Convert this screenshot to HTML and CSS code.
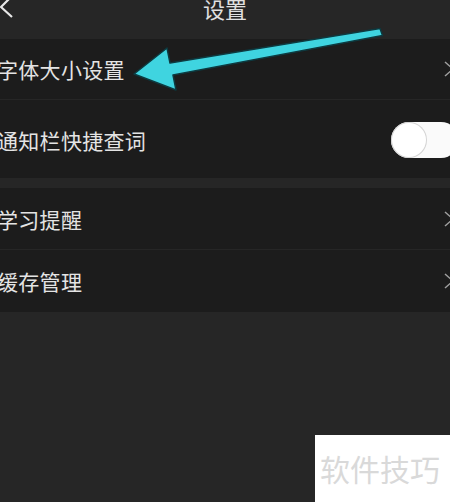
FILE: index.html
```html
<!DOCTYPE html>
<html lang="zh-CN">
<head>
  <meta charset="UTF-8">
  <meta name="viewport" content="width=device-width, initial-scale=1.0">
  <title>设置</title>
  <link rel="stylesheet" href="styles.css">
</head>
<body>

  <!-- Title Bar -->
  <div class="header">
    <svg class="back" width="16" height="20" viewBox="0 0 16 20">
      <polyline points="13,-4 2,7 13,17" fill="none" stroke="#e8e8e8" stroke-width="2.2"/>
    </svg>
    <div class="title">设置</div>
  </div>

  <!-- First Group -->
  <div class="group">
    <div class="row row-first">
      <span class="label">字体大小设置</span>
      <svg class="chevron" width="14" height="18" viewBox="0 0 14 18">
        <polyline points="2,2 10,9 2,16" fill="none" stroke="#a0a0a0" stroke-width="1.5"/>
      </svg>
    </div>
    <div class="row row-toggle">
      <span class="label">通知栏快捷查词</span>
      <div class="switch"><div class="knob"></div></div>
    </div>
  </div>

  <!-- Second Group -->
  <div class="group">
    <div class="row row-study">
      <span class="label">学习提醒</span>
      <svg class="chevron" width="14" height="18" viewBox="0 0 14 18">
        <polyline points="2,2 10,9 2,16" fill="none" stroke="#a0a0a0" stroke-width="1.5"/>
      </svg>
    </div>
    <div class="row row-cache">
      <span class="label">缓存管理</span>
      <svg class="chevron" width="14" height="18" viewBox="0 0 14 18">
        <polyline points="2,2 10,9 2,16" fill="none" stroke="#a0a0a0" stroke-width="1.5"/>
      </svg>
    </div>
  </div>

  <!-- Annotation arrow -->
  <svg class="arrow" width="450" height="110" viewBox="0 0 450 110">
    <polygon points="380,28.5 382.5,35.5 173,75 176,90 134,74 167,48 170,63"
             fill="#3fd4e0" stroke="#0d3a40" stroke-width="1.5" stroke-linejoin="round"/>
  </svg>

  <!-- Watermark -->
  <div class="watermark">软件技巧</div>

</body>
</html>
```

FILE: styles.css
```css
/* Global Styles */
body {
  margin: 0;
  padding: 0;
  width: 450px;
  height: 502px;
  overflow: hidden;
  position: relative;
  background-color: #262626;
  font-family: "Noto Sans CJK SC", "Noto Sans", sans-serif;
  color: #e4e4e4;
}

/* Title Bar */
.header {
  height: 39px;
  position: relative;
  display: flex;
  justify-content: center;
  align-items: flex-start;
}

.back {
  position: absolute;
  left: -1px;
  top: 0;
}

.title {
  font-size: 22px;
  line-height: 16px;
  color: #e0e0e0;
}

/* Groups */
.group {
  background-color: #1c1c1c;
  margin-bottom: 10px;
}

.row {
  display: flex;
  justify-content: space-between;
  align-items: center;
  border-bottom: 1px solid #262626;
}

.row:last-child {
  border-bottom: none;
}

.row-first {
  height: 60px;
}

.row-toggle {
  height: 78px;
  padding-top: 2px;
  box-sizing: border-box;
}

.row-study {
  height: 61px;
}

.row-cache {
  height: 62px;
}

.label {
  font-size: 21px;
  margin-left: -3px;
  letter-spacing: 0.3px;
}

.chevron {
  margin-right: -7px;
}

/* Toggle */
.switch {
  width: 68px;
  height: 36px;
  border-radius: 18px;
  background-color: #fafafa;
  margin-right: -9px;
  display: flex;
  align-items: center;
}

.knob {
  width: 34px;
  height: 34px;
  border-radius: 50%;
  background-color: #ffffff;
  box-shadow: 0 0 0 1px #d4d4d4;
  margin-left: 1px;
}

/* Arrow overlay */
.arrow {
  position: absolute;
  left: 0;
  top: 0;
}

/* Watermark */
.watermark {
  position: absolute;
  left: 315px;
  top: 435px;
  width: 135px;
  height: 67px;
  background-color: #ffffff;
  color: #d9d9d9;
  font-size: 30px;
  line-height: 67px;
  padding-left: 5px;
  box-sizing: border-box;
  white-space: nowrap;
}
```
